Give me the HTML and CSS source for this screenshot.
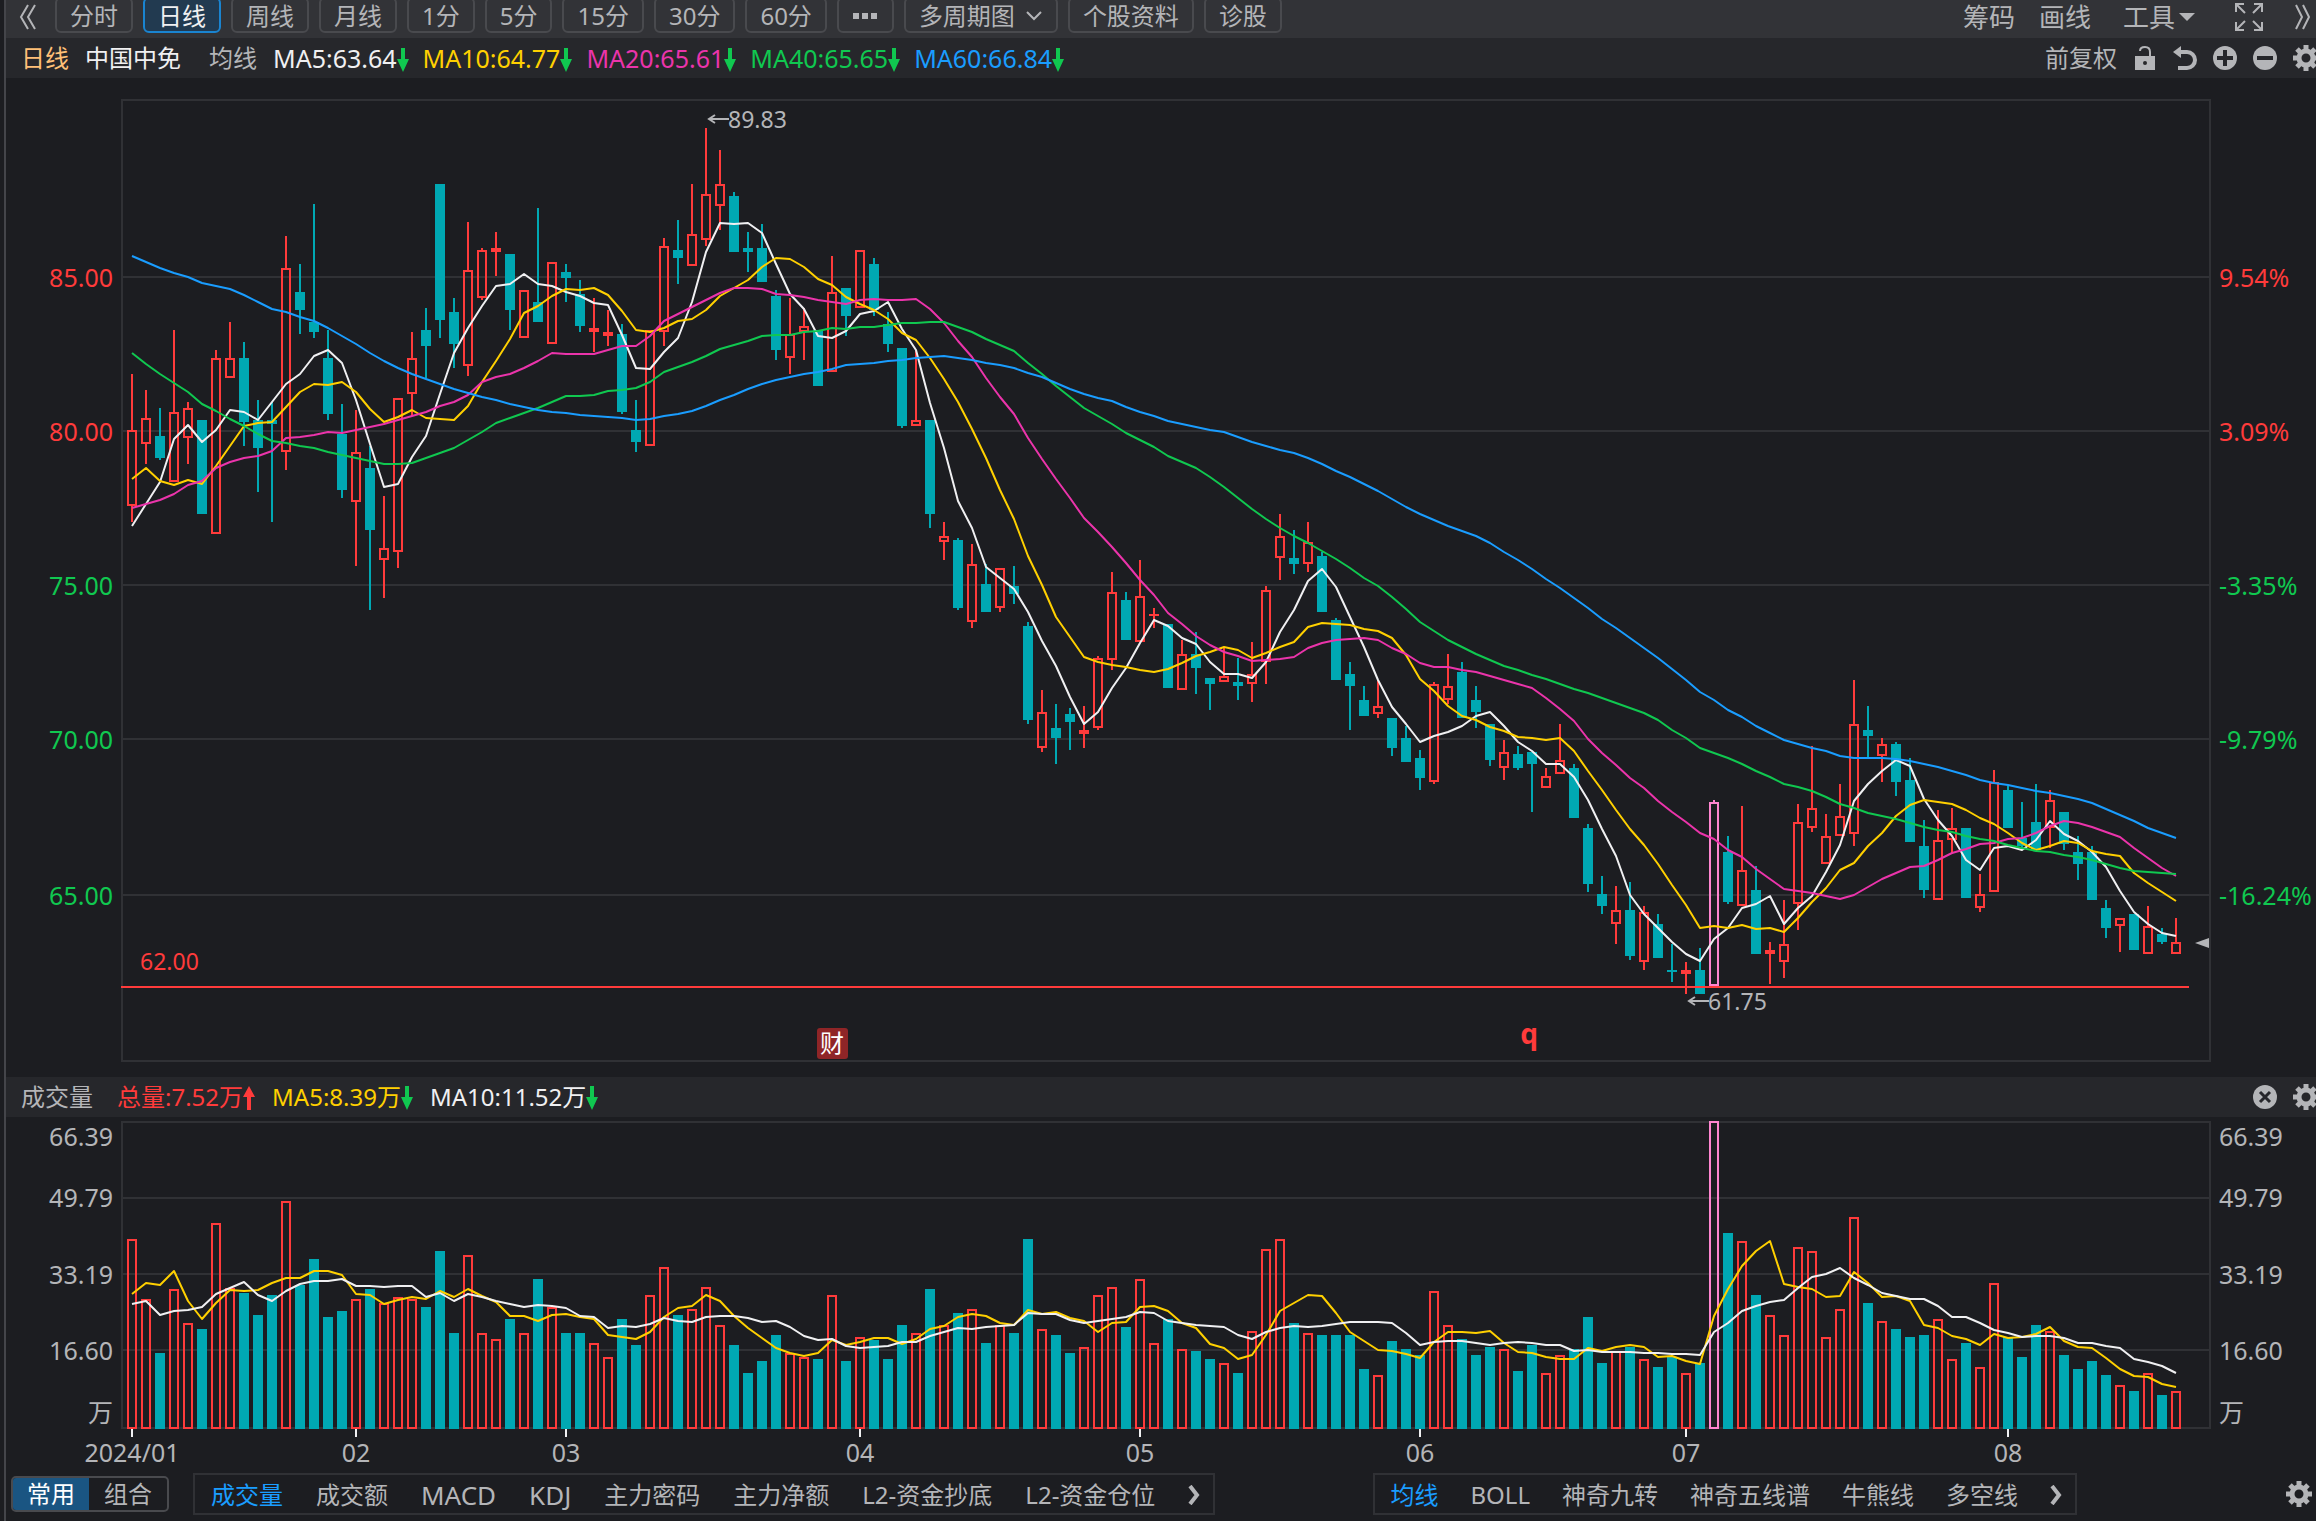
FILE: index.html
```html
<!DOCTYPE html>
<html lang="zh-CN">
<head>
<meta charset="utf-8" />
<title>中国中免 日线</title>
<link rel="stylesheet" href="styles.css">
</head>
<body>
<svg class="defs" aria-hidden="true">
<symbol id="gear" viewBox="0 0 26 26">
<circle cx="13" cy="13" r="7" fill="none" stroke="currentColor" stroke-width="5" />
<path d="M13 0v5M13 21v5M0 13h5M21 13h5M4 4l4 4M18 18l4 4M22 4l-4 4M8 18l-4 4" fill="none" stroke="currentColor" stroke-width="5" />
</symbol>
<symbol id="down" viewBox="0 0 12 24"><path d="M4 0h4v11h4l-6 13l-6-13h4z" fill="currentColor" /></symbol>
<symbol id="up" viewBox="0 0 12 24"><path d="M4 24h4v-13h4l-6-11l-6 11h4z" fill="currentColor" /></symbol>
<symbol id="next" viewBox="0 0 12 20"><path d="M2 1l7 9l-7 9" fill="none" stroke="currentColor" stroke-width="4" /></symbol>
</svg>
<div class="app">
<header class="toolbar">
<button class="plain" aria-label="收起"><svg width="18" height="26" viewBox="0 0 18 26"><path d="M9 1L2 13l7 12M16 1L9 13l7 12" fill="none" stroke="currentColor" stroke-width="2" /></svg></button>
<nav class="periods">
<button class="period">分时</button>
<button class="period active">日线</button>
<button class="period">周线</button>
<button class="period">月线</button>
<button class="period">1分</button>
<button class="period">5分</button>
<button class="period">15分</button>
<button class="period">30分</button>
<button class="period">60分</button>
<button class="period" aria-label="更多"><svg width="27" height="6" viewBox="0 0 27 6"><path d="M1 0h6v6H1zM10 0h6v6h-6zM19 0h6v6h-6z" fill="currentColor" /></svg></button>
<button class="period">多周期图<svg class="caret" width="17" height="10" viewBox="0 0 17 10"><path d="M1 1l7 7l7-7" fill="none" stroke="currentColor" stroke-width="2" /></svg></button>
<button class="period">个股资料</button>
<button class="period">诊股</button>
</nav>
<div class="tools">
<button class="plain">筹码</button>
<button class="plain">画线</button>
<button class="plain menu">工具<svg class="drop" width="16" height="8" viewBox="0 0 16 8"><path d="M0 0h16l-8 8z" fill="currentColor" /></svg></button>
<button class="plain expand" aria-label="全屏"><svg width="28" height="28" viewBox="0 0 28 28"><path d="M9 1H1v8M1 1l9 9M19 1h8v8M27 1l-9 9M9 27H1v-8M1 27l9-9M19 27h8v-8M27 27l-9-9" fill="none" stroke="currentColor" stroke-width="2" /></svg></button>
<button class="plain" aria-label="展开"><svg width="16" height="26" viewBox="0 0 16 26"><path d="M1 1l6 12l-6 12M8 1l6 12l-6 12" fill="none" stroke="currentColor" stroke-width="2" /></svg></button>
</div>
</header>

<section class="infobar">
<div class="names"><span class="orange">日线</span><span class="light">中国中免</span></div>
<div class="quotes">
<span class="label">均线</span>
<span class="light">MA5:63.64<svg class="arrow green"><use href="#down" /></svg></span>
<span class="yellow">MA10:64.77<svg class="arrow green"><use href="#down" /></svg></span>
<span class="magenta">MA20:65.61<svg class="arrow green"><use href="#down" /></svg></span>
<span class="green">MA40:65.65<svg class="arrow green"><use href="#down" /></svg></span>
<span class="blue">MA60:66.84<svg class="arrow green"><use href="#down" /></svg></span>
</div>
<div class="actions">
<button class="plain small">前复权</button>
<button class="plain" aria-label="锁定"><svg width="24" height="26" viewBox="0 0 24 26"><path d="M2 11h20v14H2z" fill="currentColor" /><path d="M7 6q0-4 5-4q5 0 5 5v4" fill="none" stroke="currentColor" stroke-width="2" /><circle class="hole" cx="12" cy="18" r="2" /></svg></button>
<button class="plain" aria-label="撤销"><svg width="24" height="26" viewBox="0 0 24 26"><path d="M5 7h9a8 8 0 0 1 0 16H5" fill="none" stroke="currentColor" stroke-width="4" /><path d="M0 7l8-6v12z" fill="currentColor" /></svg></button>
<button class="plain" aria-label="放大"><svg width="24" height="24" viewBox="0 0 24 24"><circle cx="12" cy="12" r="12" fill="currentColor" /><path class="cut" d="M4 12h16M12 4v16" /></svg></button>
<button class="plain" aria-label="缩小"><svg width="24" height="24" viewBox="0 0 24 24"><circle cx="12" cy="12" r="12" fill="currentColor" /><path class="cut" d="M4 12h16" /></svg></button>
<button class="plain" aria-label="设置"><svg width="26" height="26"><use href="#gear" /></svg></button>
</div>
</section>

<svg class="chart price" id="price"></svg>

<section class="infobar">
<div class="quotes compact">
<span class="label wide">成交量</span>
<span class="red">总量:7.52万<svg class="arrow"><use href="#up" /></svg></span>
<span class="yellow">MA5:8.39万<svg class="arrow green"><use href="#down" /></svg></span>
<span class="light">MA10:11.52万<svg class="arrow green"><use href="#down" /></svg></span>
</div>
<div class="actions">
<button class="plain" aria-label="关闭"><svg width="24" height="24" viewBox="0 0 24 24"><circle cx="12" cy="12" r="12" fill="currentColor" /><path class="cut thin" d="M7 7l10 10M17 7L7 17" /></svg></button>
<button class="plain" aria-label="设置"><svg width="26" height="26"><use href="#gear" /></svg></button>
</div>
</section>

<svg class="chart volume" id="volume"></svg>

<footer class="footer">
<div class="switch"><button class="on">常用</button><button>组合</button></div>
<nav class="tabs">
<button class="on">成交量</button>
<button>成交额</button>
<button class="latin">MACD</button>
<button class="latin">KDJ</button>
<button>主力密码</button>
<button>主力净额</button>
<button>L2-资金抄底</button>
<button>L2-资金仓位</button>
<button aria-label="更多指标"><svg width="12" height="20"><use href="#next" /></svg></button>
</nav>
<nav class="tabs main">
<button class="on">均线</button>
<button>BOLL</button>
<button>神奇九转</button>
<button>神奇五线谱</button>
<button>牛熊线</button>
<button>多空线</button>
<button aria-label="更多均线"><svg width="12" height="20"><use href="#next" /></svg></button>
</nav>
<button class="plain settings" aria-label="设置"><svg width="26" height="26"><use href="#gear" /></svg></button>
</footer>
</div>
<script src="chart.js"></script>
</body>
</html>
```
FILE: styles.css
```css
* {
  box-sizing: border-box;
}
body {
  background: #1c1d21;
  color: #b4b5b8;
  font-family: "Noto Sans", "Noto Sans CJK SC", sans-serif;
  font-size: 24px;
  margin: 0;
}
button {
  background: none;
  border: 0 none;
  color: inherit;
  font: inherit;
  line-height: 32px;
  padding: 0;
  white-space: nowrap;
}
.defs {
  display: none;
}
.app {
  border-left: 2px solid #44454a;
  display: flex;
  flex-direction: column;
  height: 100vh;
  margin-left: 4px;
  overflow: hidden;
}
.plain {
  align-items: center;
  display: flex;
}
.orange { color: #ffc078; }
.light { color: #f0f0f2; }
.yellow { color: #ffd000; }
.magenta { color: #eb34ab; }
.green { color: #10c850; }
.blue { color: #1a9dff; }
.red { color: #ff3b3b; }

/* period toolbar */
.toolbar {
  align-items: flex-start;
  background: #323337;
  display: flex;
  flex: none;
  height: 38px;
  padding: 0 5px 0 13px;
}
.toolbar > .plain {
  height: 34px;
}
.periods {
  display: flex;
  gap: 10px;
  margin-left: 18px;
}
.period {
  align-items: center;
  border: 2px solid #494a4e;
  border-radius: 6px;
  display: flex;
  height: 36px;
  margin-top: -3px;
  padding: 2px 13px 0;
}
.period.active {
  background: #223a50;
  border-color: #1a84d0;
  color: #f0f0f2;
}
.caret {
  margin-left: 11px;
}
.tools {
  align-items: center;
  display: flex;
  font-size: 26px;
  gap: 24px;
  height: 34px;
  margin-left: auto;
}
.menu {
  margin-left: 8px;
}
.drop {
  margin-left: 4px;
}
.expand {
  margin: 0 8px 0 16px;
}

/* indicator read-outs */
.infobar {
  align-items: center;
  background: #26272b;
  display: flex;
  flex: none;
  height: 40px;
  line-height: 38px;
  padding-left: 15px;
  white-space: nowrap;
}
.names {
  display: flex;
  gap: 16px;
  margin-right: 28px;
}
.quotes {
  display: flex;
  font-size: 25px;
  gap: 14px;
}
.quotes.compact {
  font-size: 24px;
  gap: 17px;
}
.label {
  font-size: 24px;
  margin-right: 2px;
}
.label.wide {
  margin-right: 7px;
}
.arrow {
  height: 24px;
  vertical-align: -4px;
  width: 12px;
}
.actions {
  align-items: center;
  display: flex;
  gap: 16px;
  margin-left: auto;
  margin-right: -3px;
}
.small {
  font-size: 24px;
}
.hole {
  fill: #26272b;
}
.cut {
  fill: none;
  stroke: #26272b;
  stroke-width: 4;
}
.cut.thin {
  stroke-width: 3;
}

/* charts */
.chart {
  display: block;
  min-height: 0;
  width: 100%;
}
.price {
  flex: 999 1 0;
}
.volume {
  flex: 353 1 0;
}
.chart text {
  fill: #b4b5b8;
  font-size: 25px;
}
.chart .end { text-anchor: end; }
.chart .mid { text-anchor: middle; }
.chart .note { font-size: 23px; }
.chart .rise { fill: #ff3b3b; }
.chart .fall { fill: #10c850; }
.chart .event {
  fill: #ff3b3b;
  font-size: 28px;
  font-weight: bold;
}
.chart .report {
  fill: #fff;
  font-size: 24px;
}
.badge {
  fill: #8f2527;
}
.grid {
  fill: #303135;
}
.tick {
  fill: #f0f0f2;
}
.marker {
  fill: #b4b5b8;
}
.lead {
  fill: none;
  stroke: #b4b5b8;
  stroke-width: 2;
}
.up, .hot {
  fill: none;
  stroke: #ff3b3b;
  stroke-width: 2;
}
.hot {
  stroke: #ff85d0;
}
.upline {
  fill: #ff3b3b;
}
.hotline {
  fill: #ff85d0;
}
.down, .downline {
  fill: #00a8b3;
}
.ma {
  fill: none;
  stroke: currentColor;
  stroke-linejoin: round;
  stroke-width: 2;
}

/* indicator tabs */
.footer {
  align-items: flex-start;
  display: flex;
  flex: none;
  height: 51px;
  padding: 3px 4px 0 5px;
}
.switch {
  border: 2px solid #494a4e;
  border-radius: 5px;
  display: flex;
  margin-top: 3px;
  overflow: hidden;
}
.switch button {
  padding: 0 15px;
}
.switch .on {
  background: #1a5582;
  color: #fff;
  padding: 0 14px;
}
.tabs {
  border: 2px solid #303135;
  display: flex;
  gap: 33px;
  height: 42px;
  margin-left: 24px;
  padding: 2px 13px 0 16px;
}
.tabs .on {
  color: #1a9dff;
}
.tabs button {
  align-items: center;
  display: flex;
}
.tabs .latin {
  font-size: 26px;
}
.tabs.main {
  gap: 32px;
  margin-left: auto;
}
.settings {
  height: 42px;
  margin-left: 209px;
}
```
FILE: chart.js
```js
// one row per day: kind (u rise, d fall, h highlighted), high, body top, body bottom, low, volume top
var days = `u374,430,506,522,1239 u390,418,444,464,1299 d408,436,458,460,1353 u330,412,482,482,1289
u402,408,438,464,1323 d420,420,514,514,1329 u350,358,534,534,1223 u322,358,378,378,1288
d342,358,422,446,1293 d400,420,448,492,1315 d402,420,424,522,1295 u236,268,452,470,1201
d264,292,310,334,1285 d204,322,332,338,1259 d330,358,414,420,1317 d404,434,490,498,1311
u410,452,502,566,1299 d446,468,530,610,1289 u496,548,560,598,1303 u398,398,552,568,1297
u332,358,394,416,1299 d308,330,346,378,1307 d184,184,320,338,1251 d298,312,344,368,1333
u222,270,366,376,1255 u248,250,298,300,1333 u232,248,252,276,1339 d254,254,310,330,1319
u290,290,338,338,1333 d208,302,322,322,1279 u262,262,344,344,1307 d264,272,278,302,1333
d280,294,326,332,1333 u298,328,332,352,1343 u310,332,336,346,1357 d324,334,412,414,1319
d400,430,442,452,1345 u330,330,446,446,1295 u238,246,332,346,1267 d220,250,258,284,1315
u184,234,266,266,1309 u128,194,240,246,1287 u150,184,206,230,1325 d192,196,252,252,1345
d232,248,252,272,1373 d224,248,282,282,1361 d290,296,350,360,1335 u298,334,358,374,1353
u308,326,332,360,1357 d330,330,386,386,1359 u256,292,372,372,1295 d288,288,316,336,1361
u250,250,308,308,1337 d258,264,310,316,1340 d312,324,344,352,1359 d348,348,426,428,1325
u350,420,426,426,1333 d420,420,514,528,1289 u522,536,542,560,1325 d538,540,608,610,1313
u544,564,622,628,1309 d564,584,612,612,1343 u568,568,608,612,1325 d566,586,594,604,1333
d622,626,720,724,1239 u690,712,748,752,1329 d704,728,738,764,1335 d708,714,722,750,1353
u706,730,734,748,1347 u656,658,728,730,1295 u572,592,660,670,1287 d592,600,640,640,1327
u560,596,642,642,1279 u608,614,616,628,1343 d624,624,688,688,1319 u640,654,690,690,1349
d632,654,668,694,1351 d678,678,684,710,1359 u648,676,682,682,1363 d658,682,686,700,1373
u642,674,684,702,1331 u586,590,662,684,1249 u514,536,558,580,1239 d530,558,564,574,1323
u522,542,564,572,1333 d552,556,612,612,1335 d618,620,680,680,1335 d662,674,686,730,1335
d686,700,716,716,1369 u680,706,714,718,1375 d718,718,748,756,1341 d726,738,762,762,1349
d750,758,778,790,1355 u682,684,782,784,1291 u654,686,700,704,1325 d662,672,718,718,1339
d686,700,712,728,1355 d724,724,760,766,1347 u740,752,768,780,1349 d746,754,768,770,1371
d752,752,764,812,1345 u768,776,788,788,1373 u724,760,774,774,1355 d764,768,818,818,1349
d824,828,884,892,1317 d876,894,906,914,1363 u886,910,924,944,1351 d882,910,956,960,1347
u906,912,962,970,1359 d914,924,958,958,1367 d944,970,972,982,1357 u962,970,974,994,1373
d948,970,994,994,1363 h800,802,986,986,1121 d836,852,902,904,1233 u806,870,906,906,1241
d866,890,954,954,1295 u942,950,954,984,1315 u900,944,962,978,1335 u804,822,904,930,1247
u746,808,828,832,1251 u814,836,864,864,1337 u784,816,836,836,1309 u680,724,834,846,1217
d706,730,736,758,1303 u738,744,756,782,1321 d742,744,782,796,1329 d758,780,842,842,1337
d820,846,890,898,1335 u810,840,900,900,1319 u808,828,840,854,1359 d828,828,898,898,1343
u874,894,908,912,1367 u770,782,892,892,1283 d786,790,828,828,1337 d802,838,846,850,1357
d784,822,850,850,1325 u790,800,828,848,1331 d812,812,844,850,1355 d836,852,864,880,1369
d846,852,900,900,1361 d900,908,928,938,1375 u918,918,926,952,1385 d914,914,950,950,1391
u906,926,954,954,1373 d928,934,942,944,1395 u918,942,954,954,1391`.split(/\s+/).map(function (s) {
  return [s[0]].concat(s.slice(1).split(',').map(Number));
});

// averages for the days that have too little history on screen
var lead = {
  5: [526, 504, 482, 439],
  10: [479, 468, 481, 485, 480, 484, 466, 446, 426],
  20: [508, 504, 500, 494, 485, 481, 468, 462, 458, 456, 451, 438, 437, 435, 432, 433, 430, 427, 424],
  40: [353, 364, 374, 383, 392, 404, 411, 419, 426, 434, 441, 443, 446, 448, 452, 455, 458, 461, 464, 464,
    463, 458, 453, 448, 440, 432, 423, 418, 413, 408, 402, 396, 396, 395, 391, 390, 388, 382, 372],
  60: [256, 262, 268, 273, 277, 283, 286, 289, 295, 302, 309, 312, 317, 321, 328, 336, 344, 353, 361, 368,
    374, 379, 384, 389, 393, 397, 400, 404, 407, 410, 412, 413, 415, 416, 417, 418, 420, 419, 416, 414,
    411, 406, 400, 395, 389, 384, 380, 377, 374, 372, 369, 365, 364, 363, 361, 360, 358, 357, 356]
};
var volumeLead = {
  5: [1294, 1283, 1285, 1271],
  10: [1304, 1301, 1315, 1311, 1310, 1307, 1294, 1288, 1282]
};
var closes = days.map(function (d) { return d[0] == 'd' ? d[3] : d[2]; });
var volumes = days.map(function (d) { return d[5]; });
var months = [[0, '2024/01'], [16, '02'], [31, '03'], [52, '04'], [72, '05'], [92, '06'], [111, '07'], [134, '08']];

function average(values, n, head) {
  return values.map(function (v, i) {
    if (i < n - 1) return head[i];
    var sum = 0;
    for (var k = i - n + 1; k <= i; k++) sum += values[k];
    return sum / n;
  });
}

function rect(x, y, w, h, cls) {
  return '<rect class="' + cls + '" x="' + x + '" y="' + y + '" width="' + w + '" height="' + h + '" shape-rendering="crispEdges"/>';
}
function text(x, y, s, cls) {
  return '<text x="' + x + '" y="' + y + '" class="' + cls + '">' + s + '</text>';
}

// set up the scales of a panel whose design area starts at `top` and is `height` tall
function panel(id, top, height) {
  var el = document.getElementById(id);
  var w = el.clientWidth, h = el.clientHeight;
  el.setAttribute('viewBox', '0 0 ' + w + ' ' + h);
  var left = 115, right = w - 105;
  var step = (right - left) / 2090 * 14;
  return {
    el: el, left: left, right: right, step: step,
    x: function (i) { return Math.round(left + 11 + i * step); },
    y: function (v) { return Math.round((v - top) * h / height); }
  };
}

function frame(p, top, bottom, lines) {
  var w = p.right - p.left, out = '';
  [top, bottom].concat(lines).forEach(function (v) {
    out += rect(p.left, p.y(v), w, 2, 'grid');
  });
  out += rect(p.left, p.y(top), 2, p.y(bottom) - p.y(top), 'grid');
  out += rect(p.right - 2, p.y(top), 2, p.y(bottom) - p.y(top), 'grid');
  return out;
}

function bar(p, i, top, bottom, kind) {
  var half = Math.round(p.step * 5 / 14);
  var x = p.x(i) - half, y = p.y(top), w = half * 2, h = p.y(bottom) - y;
  if (kind == 'd') return rect(x, y, w, h, 'down');
  if (h <= 2) return rect(x, y, w, 2, 'upline');
  return rect(x + 1, y + 1, w - 2, h - 2, kind == 'h' ? 'hot' : 'up');
}

function curve(p, values, color) {
  var points = values.map(function (v, i) { return p.x(i) + ',' + p.y(v).toFixed(0); });
  return '<polyline class="ma ' + color + '" points="' + points.join(' ') + '"/>';
}

function drawPrice() {
  var p = panel('price', 78, 999);
  var out = frame(p, 99, 1060, [276, 430, 584, 738, 894]);
  [[276, '85.00', '9.54%'], [430, '80.00', '3.09%'], [584, '75.00', '-3.35%'], [738, '70.00', '-9.79%'], [894, '65.00', '-16.24%']].forEach(function (r, i) {
    var cls = i < 2 ? 'rise' : 'fall';
    out += text(p.left - 8, p.y(r[0]) + 11, r[1], 'end ' + cls);
    out += text(p.right + 8, p.y(r[0]) + 11, r[2], cls);
  });
  days.forEach(function (d, i) {
    var cls = { u: 'upline', d: 'downline', h: 'hotline' }[d[0]];
    out += rect(p.x(i) - 1, p.y(d[1]), 2, p.y(d[2]) - p.y(d[1]), cls);
    out += rect(p.x(i) - 1, p.y(d[3]), 2, p.y(d[4]) - p.y(d[3]), cls);
    out += bar(p, i, d[2], d[3], d[0]);
  });
  out += curve(p, average(closes, 5, lead[5]), 'light');
  out += curve(p, average(closes, 10, lead[10]), 'yellow');
  out += curve(p, average(closes, 20, lead[20]), 'magenta');
  out += curve(p, average(closes, 40, lead[40]), 'green');
  out += curve(p, average(closes, 60, lead[60]), 'blue');

  // support line drawn by the user
  out += rect(p.left, p.y(986), p.right - p.left - 22, 2, 'upline');
  out += text(p.left + 19, p.y(970), '62.00', 'note rise');

  // extremes
  [[41, 119, 128], [111, 1001, 1010]].forEach(function (m, i) {
    var x = p.x(m[0]) + 3, y = p.y(m[1]);
    out += '<path class="lead" d="M' + (x + 20) + ' ' + y + 'h-20M' + (x + 6) + ' ' + (y - 4) + 'l-6 4l6 4"/>';
    out += text(x + 19, p.y(m[2]), i ? '61.75' : '89.83', 'note');
  });

  // last price
  out += '<path class="marker" d="M' + (p.right - 2) + ' ' + p.y(938) + 'v10l-14-5z"/>';

  // events
  var x = p.x(50);
  out += '<rect class="badge" x="' + (x - 15) + '" y="' + p.y(1028) + '" width="31" height="31" rx="3"/>';
  out += text(x, p.y(1052), '财', 'mid report');
  out += text(p.x(100) - 3, p.y(1044), 'q', 'mid event');
  p.el.innerHTML = out;
}

function drawVolume() {
  var p = panel('volume', 1117, 353);
  var out = frame(p, 1121, 1427, [1197, 1273, 1349]);
  [[1146, '66.39'], [1207, '49.79'], [1284, '33.19'], [1360, '16.60'], [1422, '万']].forEach(function (r) {
    out += text(p.left - 8, p.y(r[0]), r[1], 'end');
    out += text(p.right + 8, p.y(r[0]), r[1], '');
  });
  days.forEach(function (d, i) {
    out += bar(p, i, d[5], 1429, d[0]);
  });
  out += curve(p, average(volumes, 5, volumeLead[5]), 'yellow');
  out += curve(p, average(volumes, 10, volumeLead[10]), 'light');
  months.forEach(function (m) {
    out += rect(p.x(m[0]) - 1, p.y(1429), 2, 8, 'tick');
    out += text(p.x(m[0]), p.y(1462), m[1], 'mid');
  });
  p.el.innerHTML = out;
}

function draw() {
  drawPrice();
  drawVolume();
}
window.addEventListener('resize', draw, false);
draw();
```
